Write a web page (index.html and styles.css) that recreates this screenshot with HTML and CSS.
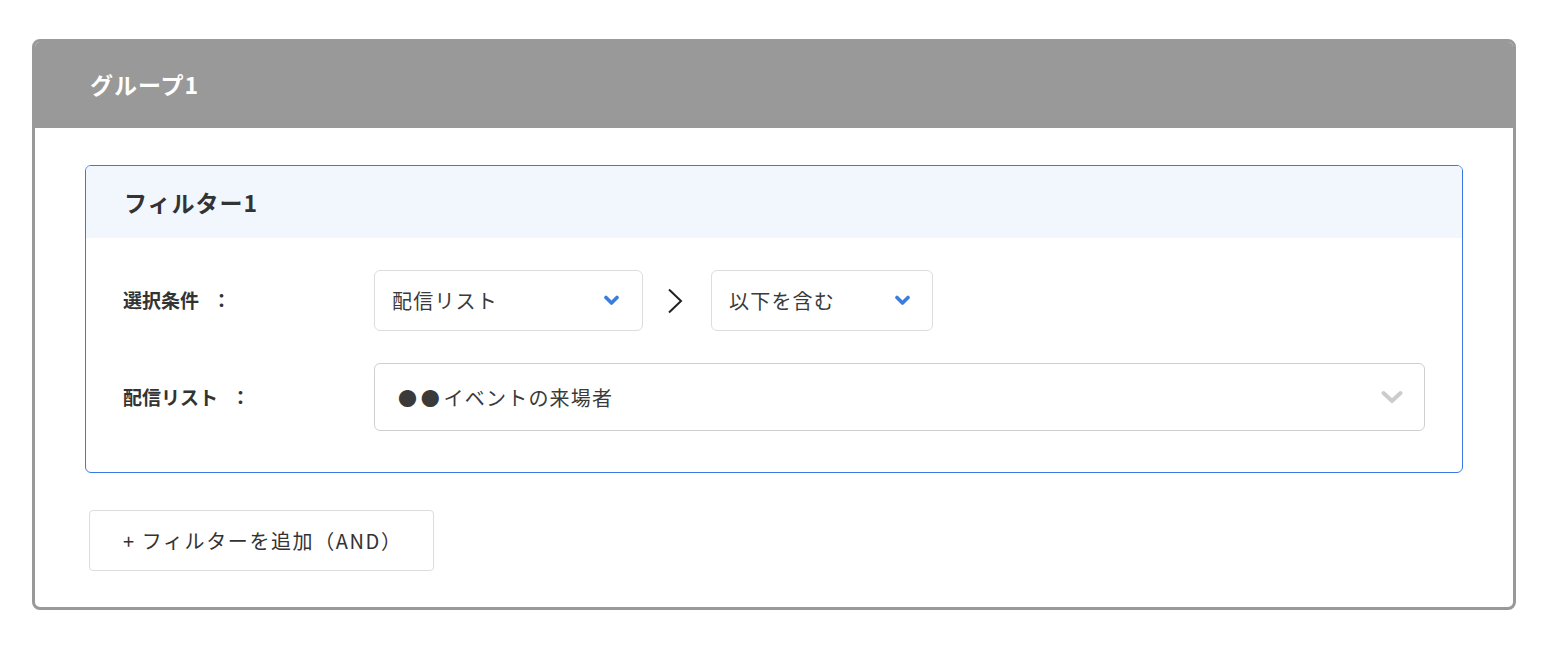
FILE: index.html
```html
<!DOCTYPE html>
<html lang="ja">
<head>
<meta charset="utf-8">
<title>グループ1</title>
<link rel="stylesheet" href="styles.css">
</head>
<body>
<div class="group">
  <div class="group-head">グループ1</div>
  <div class="group-body">
    <div class="filter">
      <div class="filter-head">フィルター1</div>
      <div class="filter-body">
        <div class="row row-a">
          <div class="label">選択条件<span class="colon">：</span></div>
          <div class="controls">
            <div class="select sel-1">
              <span>配信リスト</span>
              <svg class="chev" width="15" height="11" viewBox="0 0 15 11"><polyline points="2,2.5 7.5,8 13,2.5" fill="none" stroke="#3b7ddd" stroke-width="3.6" stroke-linecap="round" stroke-linejoin="round"/></svg>
            </div>
            <svg class="arrow" width="17" height="26" viewBox="0 0 17 26"><polyline points="2,1.5 14,13 2,24.5" fill="none" stroke="#222" stroke-width="2"/></svg>
            <div class="select sel-2">
              <span>以下を含む</span>
              <svg class="chev" width="15" height="11" viewBox="0 0 15 11"><polyline points="2,2.5 7.5,8 13,2.5" fill="none" stroke="#3b7ddd" stroke-width="3.6" stroke-linecap="round" stroke-linejoin="round"/></svg>
            </div>
          </div>
        </div>
        <div class="row row-b">
          <div class="label">配信リスト<span class="colon">：</span></div>
          <div class="select sel-3">
            <span><span class="dots">●●</span>イベントの来場者</span>
            <svg class="chev-gray" width="22" height="14" viewBox="0 0 22 14"><polyline points="2.5,3 11,11 19.5,3" fill="none" stroke="#cccccc" stroke-width="4" stroke-linecap="round" stroke-linejoin="round"/></svg>
          </div>
        </div>
      </div>
    </div>
    <button class="add-btn">+ フィルターを追加（AND）</button>
  </div>
</div>
</body>
</html>
```
FILE: styles.css
```css
* { box-sizing: border-box; }
body {
  margin: 0;
  padding: 39px 0 0 32px;
  background: #fff;
  font-family: "Noto Sans CJK JP", "Noto Sans", sans-serif;
  color: #333;
}
.group {
  width: 1484px;
  border: 3px solid #999;
  border-radius: 8px;
  overflow: hidden;
}
.group-head {
  height: 86px;
  background: #999;
  color: #fff;
  font-size: 23px;
  font-weight: bold;
  letter-spacing: 1px;
  display: flex;
  align-items: center;
  padding: 0 0 3px 55px;
}
.group-body {
  padding: 37px 50px 36px 50px;
}
.filter {
  border: 1px solid #3b78e7;
  border-radius: 6px;
  overflow: hidden;
}
.filter-head {
  height: 72px;
  background: #f2f7fe;
  display: flex;
  align-items: center;
  padding-left: 38px;
  font-size: 23px;
  font-weight: bold;
  letter-spacing: 1px;
  color: #333;
}
.filter-body {
  padding: 32px 37px 41px 37px;
  display: flex;
  flex-direction: column;
  gap: 32px;
}
.row {
  display: flex;
  align-items: center;
}
.label {
  width: 251px;
  flex: none;
  font-size: 19px;
  font-weight: bold;
  color: #333;
  padding-bottom: 2px;
}
.colon { margin-left: 13px; }
.controls {
  display: flex;
  align-items: center;
}
.select {
  display: flex;
  align-items: center;
  justify-content: space-between;
  border: 1px solid #ddd;
  border-radius: 6px;
  font-size: 20px;
  letter-spacing: 0.06em;
  color: #3a3a3a;
  background: #fff;
}
.sel-1 {
  width: 269px;
  height: 61px;
  padding: 0 23px 0 17px;
}
.sel-2 {
  width: 222px;
  height: 61px;
  padding: 0 22px 0 17px;
}
.arrow {
  margin: 0 27px 0 24px;
}
.sel-3 {
  flex: 1;
  height: 68px;
  padding: 0 21px 0 23px;
  border-color: #cfcfcf;
}
.dots {
  font-size: 19px;
  letter-spacing: 0.2em;
}
.add-btn {
  margin: 37px 0 0 4px;
  width: 345px;
  height: 61px;
  border: 1px solid #ddd;
  border-radius: 4px;
  background: #fff;
  font-family: inherit;
  font-size: 20px;
  letter-spacing: 0.08em;
  color: #333;
  text-align: left;
  padding: 0 0 0 33px;
  display: block;
}
```
